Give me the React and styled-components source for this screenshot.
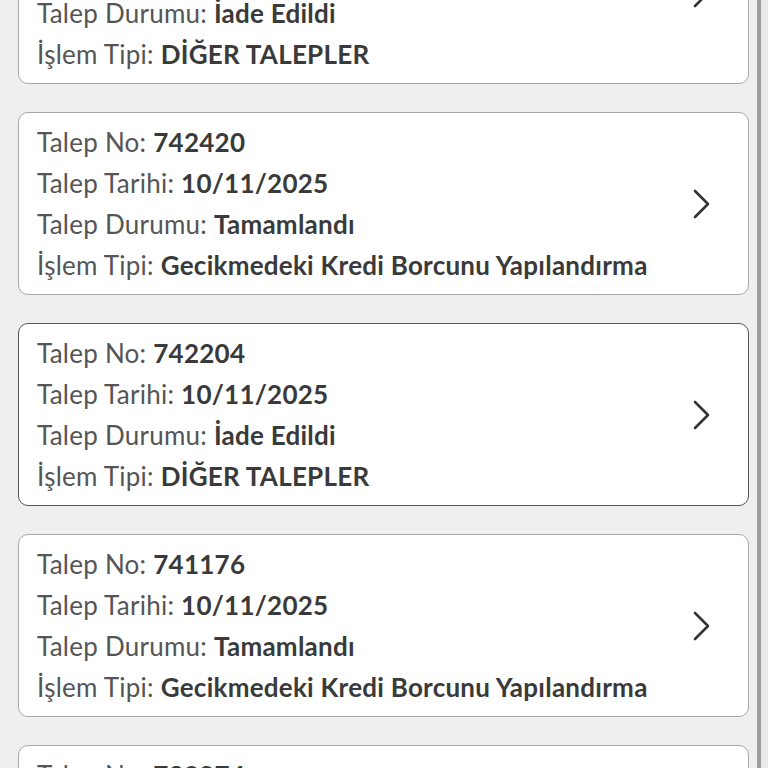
import React from "react";
import styled, { createGlobalStyle } from "styled-components";

const GlobalStyle = createGlobalStyle`
  html, body {
    margin: 0;
    padding: 0;
    background: #efefef;
    overflow: hidden;
  }
  body {
    font-family: Lato, "Open Sans", Arial, sans-serif;
  }
`;

const requests = [
  { no: "742454", date: "10/11/2025", status: "İade Edildi", type: "DİĞER TALEPLER" },
  { no: "742420", date: "10/11/2025", status: "Tamamlandı", type: "Gecikmedeki Kredi Borcunu Yapılandırma" },
  { no: "742204", date: "10/11/2025", status: "İade Edildi", type: "DİĞER TALEPLER", active: true },
  { no: "741176", date: "10/11/2025", status: "Tamamlandı", type: "Gecikmedeki Kredi Borcunu Yapılandırma" },
  { no: "739874", date: "10/11/2025", status: "Tamamlandı", type: "Gecikmedeki Kredi Borcunu Yapılandırma" },
];

const Screen = styled.div`
  display: flex;
  height: 768px;
  overflow: hidden;
`;

// the list is scrolled: the first card starts above the window
const List = styled.div`
  flex: 1;
  display: flex;
  flex-direction: column;
  gap: 28px;
  padding: 0 8px 0 18px;
  margin-top: -99px;
`;

const ScrollTrack = styled.div`
  width: 7px;
  border-left: 4px solid #9c9c9c;
  background: #e9e9e9;
`;

const Card = styled.div`
  display: flex;
  align-items: center;
  background: #fff;
  border: 1.5px solid ${(p) => (p.$active ? "#555" : "#a8a8a8")};
  border-radius: 10px;
  padding: 9px 0 8px 18px;
  flex-shrink: 0;
`;

const Info = styled.div`
  flex: 1;
  display: flex;
  flex-direction: column;
`;

const Line = styled.div`
  font-size: 26px;
  line-height: 41px;
  letter-spacing: 0.25px;
  color: #555;
  white-space: nowrap;
`;

const Value = styled.span`
  font-weight: 700;
  color: #3a3a3a;
`;

const Chevron = styled.svg`
  width: 20px;
  height: 30px;
  margin-right: 36px;
  flex-shrink: 0;
`;

const Row = ({ label, value }) => (
  <Line>
    {label}: <Value>{value}</Value>
  </Line>
);

export default function App() {
  return (
    <>
      <GlobalStyle />
      <Screen>
        <List>
          {requests.map((r) => (
            <Card key={r.no} $active={r.active}>
              <Info>
                <Row label="Talep No" value={r.no} />
                <Row label="Talep Tarihi" value={r.date} />
                <Row label="Talep Durumu" value={r.status} />
                <Row label="İşlem Tipi" value={r.type} />
              </Info>
              <Chevron viewBox="0 0 20 30" fill="none">
                <polyline
                  points="3,2 16,15 3,28"
                  stroke="#333"
                  strokeWidth="2.6"
                  strokeLinecap="round"
                  strokeLinejoin="round"
                />
              </Chevron>
            </Card>
          ))}
        </List>
        <ScrollTrack />
      </Screen>
    </>
  );
}
